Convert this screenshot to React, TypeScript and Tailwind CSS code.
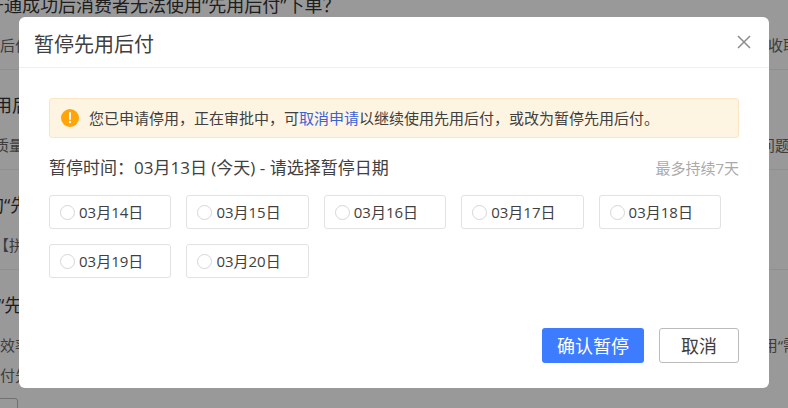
import { useState } from "react";

type Line = { start: string; end?: string; indent?: boolean; inset?: boolean };
type Topic = { title: string; outdent?: boolean; indent?: boolean; lines: Line[] };

const topics: Topic[] = [
  {
    title: "开通成功后消费者无法使用“先用后付”下单？",
    outdent: true,
    lines: [{ start: "后付", end: "收取", indent: true }],
  },
  { title: "用后", lines: [{ start: "质量", end: "问题", inset: true }] },
  { title: "的“先", outdent: true, lines: [{ start: "【拼" }] },
  {
    title: "“先",
    indent: true,
    lines: [
      { start: "效率", end: "用“需", indent: true },
      { start: "付先", indent: true },
    ],
  },
];

const dates = ["03月14日", "03月15日", "03月16日", "03月17日", "03月18日", "03月19日", "03月20日"];

function TopicList() {
  return (
    <main className="-mt-[30px] -mr-2.5 -ml-1.5 whitespace-nowrap" aria-hidden="true">
      {topics.map((topic) => (
        <section key={topic.title} className="border-b border-[#eee] pt-5 pb-[9px]">
          <h2
            className={`text-[18px] leading-[30px] text-[#333] ${topic.outdent ? "-ml-2" : ""} ${
              topic.indent ? "pl-1" : ""
            }`}
          >
            {topic.title}
          </h2>
          <div className="mt-2.5">
            {topic.lines.map((line) => (
              <p
                key={line.start}
                className={`flex justify-between text-[15px] leading-[30px] text-[#666] ${
                  line.indent ? "pl-1.5" : ""
                } ${line.inset ? "pr-2" : ""}`}
              >
                <span>{line.start}</span>
                {line.end && <span>{line.end}</span>}
              </p>
            ))}
          </div>
          {topic.lines.length > 1 && (
            <div className="mt-2 h-9 w-6 rounded-[3px] border border-[#bbb]" />
          )}
        </section>
      ))}
    </main>
  );
}

function PauseDialog() {
  const [date, setDate] = useState("");
  return (
    <div
      role="dialog"
      aria-modal="true"
      aria-labelledby="pause-title"
      className="w-full rounded-md bg-white text-[#404040]"
    >
      <header className="flex items-center justify-between border-b border-[#eee] pt-1 pr-[18px] pl-[15px]">
        <h1 id="pause-title" className="pt-0.5 text-[20px] leading-[44px]">
          暂停先用后付
        </h1>
        <button type="button" aria-label="关闭" className="pb-1 text-[#8c8c8c]">
          <svg width="14" height="14" viewBox="0 0 14 14" fill="none" stroke="currentColor" strokeWidth="1.5">
            <path d="M1 1l12 12M13 1L1 13" />
          </svg>
        </button>
      </header>

      <div className="px-[30px] pt-[30px] pb-[25px]">
        <div className="flex items-center gap-2.5 rounded-[3px] border border-[#fbe6c4] bg-[#fef4e2] px-[11px] py-[7px]">
          <svg width="18" height="18" viewBox="0 0 18 18" className="shrink-0">
            <circle cx="9" cy="9" r="9" fill="#ffa50a" />
            <path d="M9 4v6" stroke="#fff" strokeWidth="2" strokeLinecap="round" />
            <circle cx="9" cy="13" r="1.2" fill="#fff" />
          </svg>
          <p className="text-[15px] leading-6">
            您已申请停用，正在审批中，可
            <a href="#cancel" className="text-[#3a62d7]">
              取消申请
            </a>
            以继续使用先用后付，或改为暂停先用后付。
          </p>
        </div>

        <div className="mt-[15px] flex items-center justify-between leading-[30px]">
          <p className="text-[17px]">暂停时间：03月13日 (今天) - 请选择暂停日期</p>
          <span className="text-[15px] text-[#aaa]">最多持续7天</span>
        </div>

        <div className="mt-3 grid grid-cols-5 gap-[15px] pr-[18px]">
          {dates.map((d) => (
            <label
              key={d}
              className="flex h-[34px] items-center gap-1 rounded-[3px] border border-[#e2e2e2] pl-2.5 text-[15px]"
            >
              <input
                type="radio"
                name="pause-date"
                value={d}
                checked={date === d}
                onChange={() => setDate(d)}
                className="size-[15px] appearance-none rounded-full border border-[#d6d6d6] checked:border-4 checked:border-[#3d7cff]"
              />
              {d}
            </label>
          ))}
        </div>

        <footer className="mt-[50px] flex justify-end gap-[15px] text-[18px]">
          <button type="button" className="h-[35px] w-[102px] rounded-[3px] bg-[#3d7cff] pt-0.5 text-white">
            确认暂停
          </button>
          <button type="button" className="h-[35px] w-20 rounded-[3px] border border-[#bbb] bg-white pt-0.5">
            取消
          </button>
        </footer>
      </div>
    </div>
  );
}

export default function App() {
  return (
    <div className="h-screen overflow-hidden bg-white font-['Open_Sans','Noto_Sans_CJK_SC',sans-serif]">
      <TopicList />
      <div className="fixed inset-0 flex items-start bg-black/40 px-[19px] pt-[17px]">
        <PauseDialog />
      </div>
    </div>
  );
}
